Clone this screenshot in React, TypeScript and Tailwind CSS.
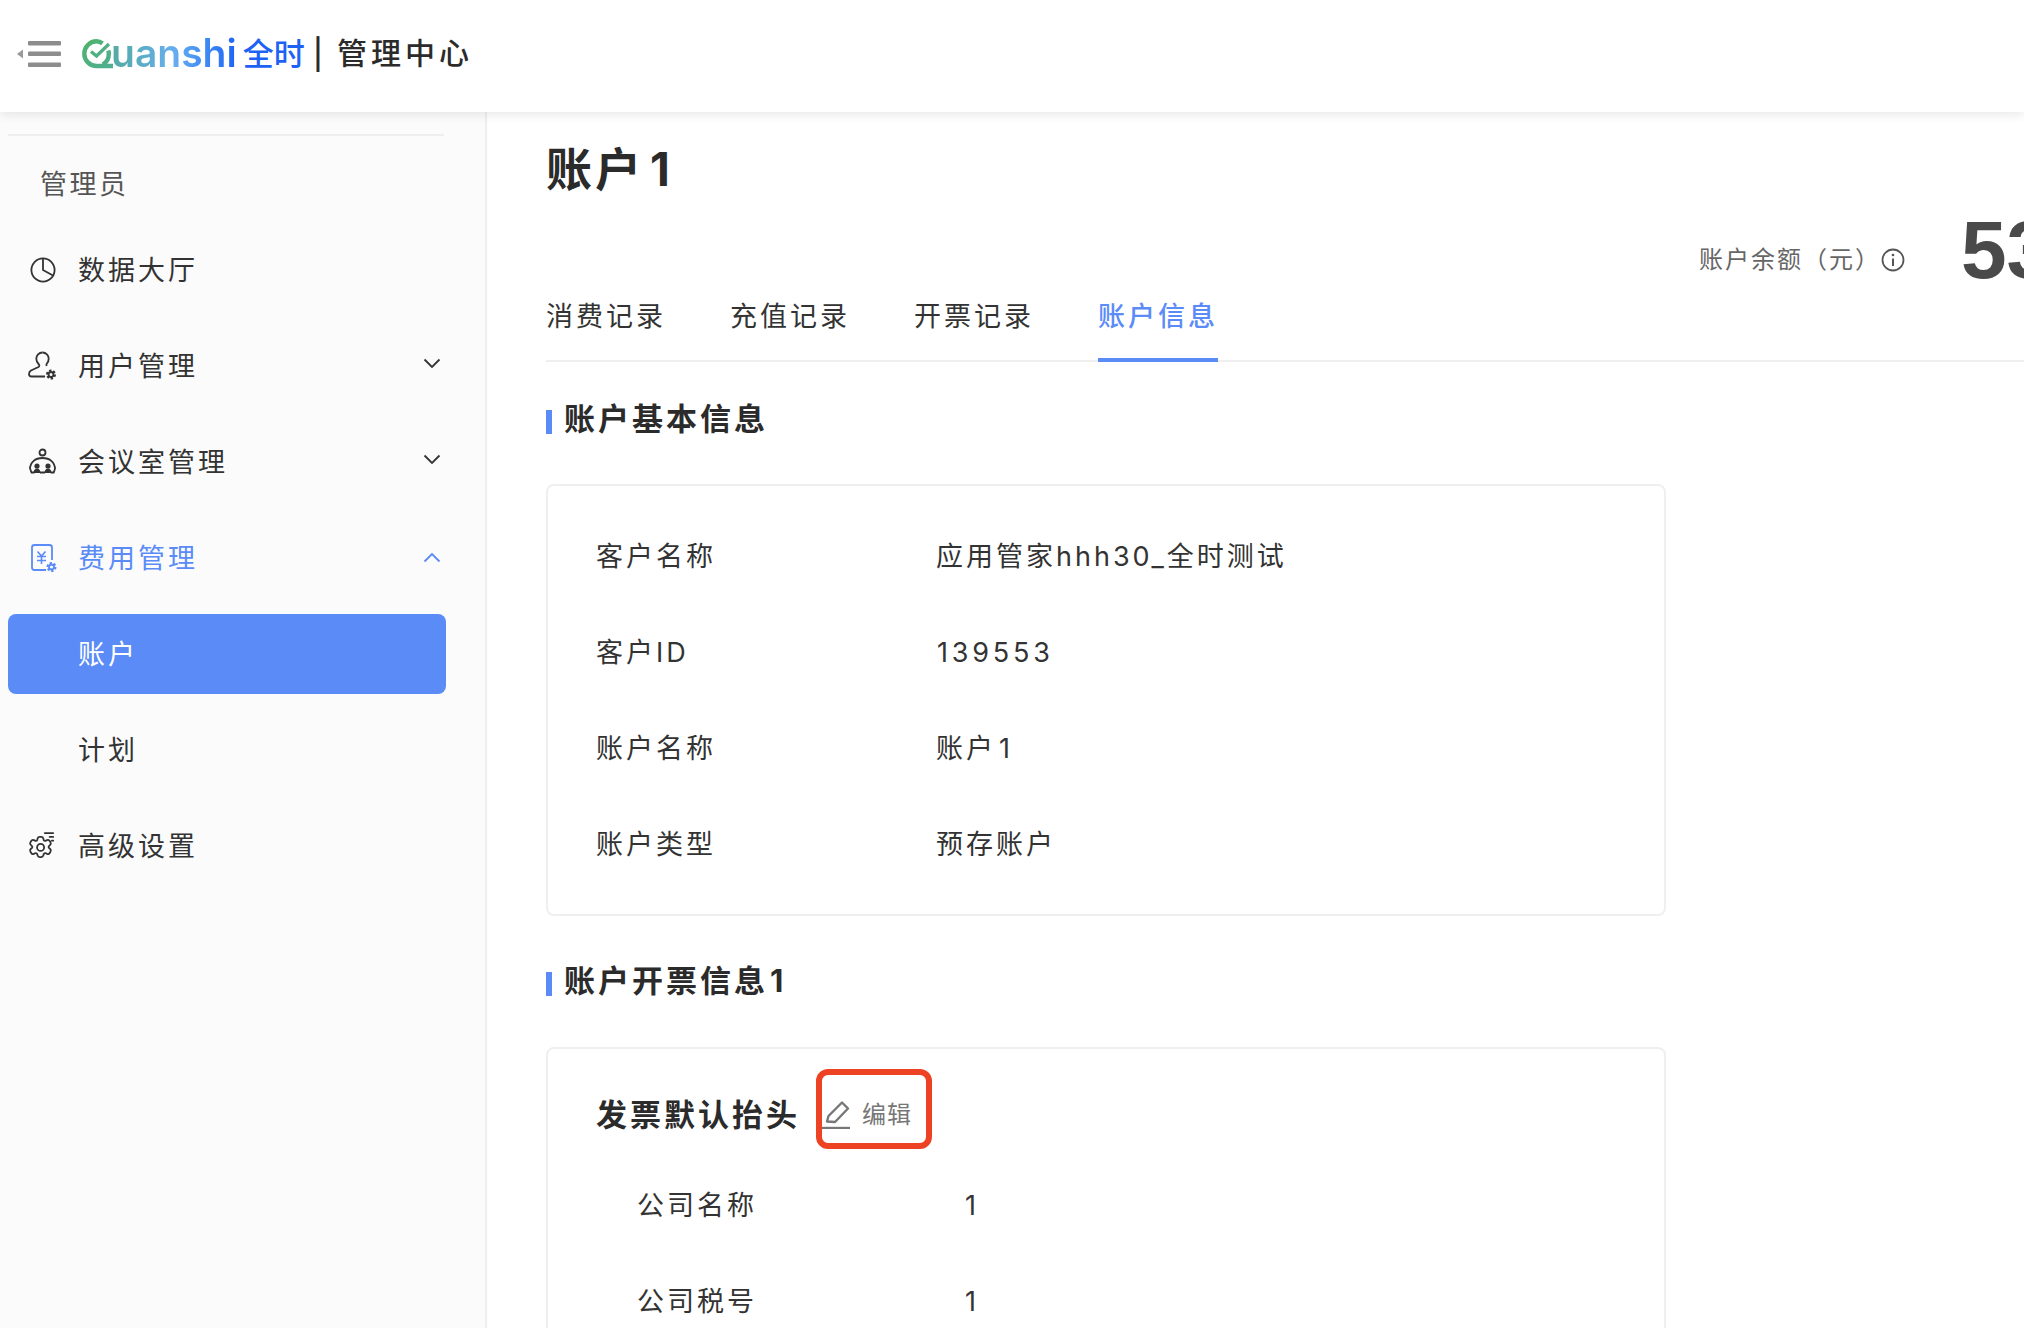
import React from "react";

const Gear = ({ cx, cy, c }: { cx: number; cy: number; c: string }) => (
  <g>
    <circle cx={cx} cy={cy} r={3.4} fill="none" stroke={c} strokeWidth={3.2} strokeDasharray="2 1.500" />
    <circle cx={cx} cy={cy} r={2.500} fill="none" stroke={c} strokeWidth={1.800} />
  </g>
);

const IconPie = () => (
  <svg width="28" height="28" viewBox="0 0 28 28" fill="none" stroke="#333" strokeWidth="1.800" className="ml-[29px] shrink-0">
    <circle cx="14" cy="14" r="11.600" />
    <path d="M14 2.400V14L24 19.500" />
  </svg>
);
const IconUser = () => (
  <svg width="30" height="30" viewBox="0 0 30 30" fill="none" stroke="#333" strokeWidth="1.800" className="ml-[28px] shrink-0">
    <path d="M14.500 1.500c-3.600 0-6.200 2.800-6.200 6.200 0 2.600 1.200 4.400 2.600 5.800.8.800.5 2-.4 2.500L3 19.500C1.500 20.400 1 21.600 1 23c0 1.600 1 2.500 2.500 2.500H17" />
    <path d="M14.500 1.500c3.600 0 6.200 2.800 6.200 6.200 0 2.200-.8 3.600-1.800 4.800-.6.700-.7 1.500-.3 2.500" />
    <Gear cx={23} cy={23.500} c="#333" />
  </svg>
);
const IconRoom = () => (
  <svg width="30" height="28" viewBox="0 0 30 28" fill="none" stroke="#333" strokeWidth="1.800" className="ml-[28px] shrink-0">
    <circle cx="14.500" cy="4.500" r="3" />
    <path d="M2 21c0-6.500 5-11 12.500-11S27 14.500 27 21" />
    <path d="M2.200 21l1.300 3.500h3M27 21l-1.300 3.500h-3M12 24.500h5" />
    <circle cx="9" cy="18" r="2.600" fill="#333" stroke="none" />
    <circle cx="20" cy="18" r="2.600" fill="#333" stroke="none" />
    <path d="M5.500 25c0-3 1.600-4.500 3.500-4.500s3.500 1.500 3.500 4.500M16.500 25c0-3 1.600-4.500 3.500-4.500s3.500 1.500 3.500 4.500" fill="#333" stroke="none" />
  </svg>
);
const IconFee = () => (
  <svg width="30" height="30" viewBox="0 0 30 30" fill="none" stroke="#5a8bf7" strokeWidth="1.800" className="ml-[30px] shrink-0">
    <path d="M16 27H4.500A2.500 2.500 0 0 1 2 24.500V4.500A2.500 2.500 0 0 1 4.500 2h15A2.500 2.500 0 0 1 22 4.500V17" />
    <path d="M7.500 8.500l4 4.500 4-4.500M7 13.500h9M7 17.500h9M11.500 13v8" strokeWidth="1.600" />
    <Gear cx={21.500} cy={24} c="#5a8bf7" />
  </svg>
);
const IconSettings = () => (
  <svg width="28" height="28" viewBox="3 1 20 20" fill="none" stroke="#333" strokeWidth="1.300" strokeLinecap="round" strokeLinejoin="round" className="ml-[28px] shrink-0">
    <path d="M12.500 4.500c.8 0 1.300.6 1.500 1.300l.2.800c.2.600 1 .9 1.600.6l.8-.4c.7-.3 1.500-.1 1.900.6l.6 1c.4.700.2 1.500-.4 2l-.6.500c-.5.400-.5 1.200 0 1.600l.6.500c.6.500.8 1.300.4 2l-.6 1c-.4.700-1.200.9-1.900.6l-.8-.4c-.6-.3-1.400 0-1.600.6l-.2.800c-.2.700-.7 1.300-1.500 1.300h-1.200c-.8 0-1.300-.6-1.500-1.300l-.2-.8c-.2-.6-1-.9-1.600-.6l-.8.4c-.7.300-1.500.1-1.900-.6l-.6-1c-.4-.7-.2-1.500.4-2l.6-.5c.5-.4.500-1.200 0-1.600l-.6-.5c-.6-.5-.8-1.300-.4-2l.6-1c.4-.7 1.200-.9 1.900-.6l.8.4c.6.300 1.400 0 1.600-.6l.2-.8c.2-.7.700-1.300 1.500-1.300z" />
    <circle cx="12" cy="12" r="2.500" />
    <path d="M15 1.800H21M18.500 4.500H21M20 7.200h1" />
  </svg>
);
const Chevron = ({ up, c }: { up?: boolean; c: string }) => (
  <svg width="18" height="11" viewBox="0 0 18 11" fill="none" stroke={c} strokeWidth="1.800" className={`ml-auto mr-[44px] shrink-0 ${up ? "mb-[2px]" : "mb-[6px]"}`}>
    <path d={up ? "M1.500 9.500L9 2l7.500 7.500" : "M1.500 1.500L9 9l7.500-7.500"} />
  </svg>
);

const MenuItem = ({ icon, label, chevron, up, active }: { icon: React.ReactNode; label: string; chevron?: boolean; up?: boolean; active?: boolean }) => {
  const c = active ? "#5a8bf7" : "#333";
  return (
    <div className={`flex items-center h-20 mb-4 ${active ? "text-[#5a8bf7]" : "text-[#333]"}`}>
      <div className="w-[78px] shrink-0 flex items-center">{icon}</div>
      <span className="text-[27px] tracking-[3px] whitespace-nowrap pt-[2px]">{label}</span>
      {chevron && <Chevron up={up} c={c} />}
    </div>
  );
};

const SectionTitle = ({ children, className }: { children: React.ReactNode; className: string }) => (
  <div className={`flex items-center h-10 ${className}`}>
    <div className="w-[6px] h-6 bg-[#5a8bf7] mt-[6px] shrink-0" />
    <h2 className="ml-[12px] text-[31px] leading-10 font-bold tracking-[3px] text-[#2b2b2b] whitespace-nowrap">{children}</h2>
  </div>
);

const InfoRow = ({ label, value, w, digits }: { label: string; value: React.ReactNode; w: string; digits?: boolean }) => (
  <div className="flex items-center h-24 pt-[2px] text-[27px] tracking-[3px] text-[#333]">
    <div className={`shrink-0 ${w}`}>{label}</div>
    <div className={digits ? "tracking-[3.800px] ml-[1px]" : ""}>{value}</div>
  </div>
);

export default function App() {
  return (
    <div className="w-[2024px] h-[1328px] overflow-hidden flex flex-col bg-white font-['Inter','Noto_Sans_CJK_SC',sans-serif]">
      <header className="h-[112px] shrink-0 bg-white flex items-center pb-[5px] relative z-10 shadow-[0_3px_10px_rgba(0,0,0,0.09)]">
        <svg width="44" height="26" viewBox="0 0 44 26" className="ml-[17px] shrink-0" fill="#8d8d8d">
          <path d="M0 13l6-4.500v9z" fill="#9a9a9a" />
          <rect x="11" y="0" width="33" height="4.500" rx="1" />
          <rect x="11" y="10.500" width="33" height="4.500" rx="1" />
          <rect x="11" y="21.500" width="33" height="4.500" rx="1" />
        </svg>
        <svg width="32" height="30" viewBox="0 0 32 30" fill="none" className="ml-[21px] shrink-0">
          <defs>
            <linearGradient id="qg" x1="0" y1="0" x2="1" y2="1">
              <stop offset="0" stopColor="#4fb26c" />
              <stop offset="1" stopColor="#4fae93" />
            </linearGradient>
          </defs>
          <path d="M20.500 4.500C18.700 3 16.500 2.300 14.500 2.300 7.800 2.300 2.300 8 2.300 14.700S7.800 27 14.500 27H31" stroke="url(#qg)" strokeWidth="4.400" />
          <path d="M26.300 11.500c.3 1 .5 2.100.5 3.200 0 4.600-2.300 8.800-6 10.800" stroke="url(#qg)" strokeWidth="4.400" />
          <path d="M9 12.500l5.500 4.500L27 5" stroke="url(#qg)" strokeWidth="3.200" />
        </svg>
        <span className="ml-[-3px] text-[39px] leading-none font-semibold bg-linear-to-r from-[#54aba0] via-[#66adf0] to-[#1e62f5] bg-clip-text text-transparent mb-[2px]">uanshi</span>
        <span className="ml-[6px] text-[31px] text-[#1e62f5] font-medium leading-none">全时</span>
        <span className="ml-[8px] text-[30px] text-[#2b2b2b] font-medium leading-none">|</span>
        <span className="ml-[14px] text-[30px] tracking-[4px] text-[#2b2b2b] font-medium leading-none mb-[2px]">管理中心</span>
      </header>

      <div className="flex flex-1 min-h-0">
        <aside className="w-[487px] shrink-0 bg-[#fbfbfb] border-r-2 border-[#eeeeee]">
          <div className="mt-[22px] ml-2 w-[436px] h-[2px] bg-[#eeeeee]" />
          <div className="h-[94px] flex items-center pl-[40px] pt-[5px] text-[27px] tracking-[2.500px] text-[#555]">管理员</div>
          <MenuItem icon={<IconPie />} label="数据大厅" />
          <MenuItem icon={<IconUser />} label="用户管理" chevron />
          <MenuItem icon={<IconRoom />} label="会议室管理" chevron />
          <MenuItem icon={<IconFee />} label="费用管理" chevron up active />
          <div className="ml-2 w-[438px] h-20 mb-4 rounded-lg bg-[#5a8bf7] flex items-center pl-[70px] pt-[2px] text-[27px] tracking-[3px] text-white">账户</div>
          <div className="h-20 mb-4 flex items-center pl-[78px] pt-[2px] text-[27px] tracking-[3px] text-[#333]">计划</div>
          <MenuItem icon={<IconSettings />} label="高级设置" />
        </aside>

        <main className="flex-1 min-w-0 overflow-hidden pl-[59px]">
          <div className="h-[112px] flex items-center pt-[2px]">
            <h1 className="text-[46px] font-bold tracking-[3px] text-[#2b2b2b] leading-none">账户<span className="ml-[6px]">1</span></h1>
          </div>
          <div className="h-[72px] flex items-center ml-[1153px] w-[400px] whitespace-nowrap">
            <span className="text-[24px] tracking-[2px] text-[#666]">账户余额（元）</span>
            <svg width="24" height="24" viewBox="0 0 24 24" fill="none" stroke="#555" strokeWidth="1.800" className="shrink-0">
              <circle cx="12" cy="12" r="10.500" />
              <path d="M12 10.500V18" strokeWidth="2" />
              <circle cx="12" cy="7" r="1.300" fill="#555" stroke="none" />
            </svg>
            <span className="ml-[56px] mb-[20px] text-[82px] leading-none font-bold text-[#4a4a4a] font-['Liberation_Sans',sans-serif]">53</span>
          </div>
          <nav className="flex gap-16 h-[66px] border-b-2 border-[#efefef]">
            <div className="h-[42px] leading-[42px] text-[27px] tracking-[3px] text-[#333]">消费记录</div>
            <div className="h-[42px] leading-[42px] text-[27px] tracking-[3px] text-[#333]">充值记录</div>
            <div className="h-[42px] leading-[42px] text-[27px] tracking-[3px] text-[#333]">开票记录</div>
            <div className="h-[66px] leading-[42px] text-[27px] tracking-[3px] text-[#5a8bf7] font-medium border-b-4 border-[#5a8bf7]">账户信息</div>
          </nav>

          <SectionTitle className="mt-[37px] mb-[45px]">账户基本信息</SectionTitle>
          <section className="w-[1120px] border-2 border-[#efefef] rounded-lg py-[22px] pl-[48px]">
            <InfoRow label="客户名称" value="应用管家hhh30_全时测试" w="w-[340px]" />
            <InfoRow label="客户ID" value="139553" w="w-[340px]" digits />
            <InfoRow label="账户名称" value={<>账户<span className="ml-[3px]">1</span></>} w="w-[340px]" />
            <InfoRow label="账户类型" value="预存账户" w="w-[340px]" />
          </section>

          <SectionTitle className="mt-[45px] mb-[46px]">账户开票信息<span className="ml-[2px]">1</span></SectionTitle>
          <section className="w-[1120px] border-2 border-[#efefef] rounded-lg pt-[26px] pb-[100px] pl-[48px]">
            <div className="flex items-center h-20 mb-[2px]">
              <h3 className="text-[31px] font-bold tracking-[3px] text-[#2b2b2b] whitespace-nowrap">发票默认抬头</h3>
              <div className="relative ml-[22px] flex items-center">
                <svg width="28" height="28" viewBox="0 0 28 28" fill="none" stroke="#777" strokeWidth="2.400" className="shrink-0">
                  <path d="M5 20.500l1.500-5.500L20 1.500l6 6L13 21z" strokeLinejoin="round" />
                  <path d="M0 27h28" />
                </svg>
                <span className="ml-3 text-[24px] tracking-[1px] text-[#777]">编辑</span>
                <div className="absolute left-[-6px] top-[-28px] w-[116px] h-20 border-[6px] border-[#ee4225] rounded-[12px]" />
              </div>
            </div>
            <div className="pl-[41px]">
              <InfoRow label="公司名称" value="1" w="w-[328px]" />
              <InfoRow label="公司税号" value="1" w="w-[328px]" />
            </div>
          </section>
        </main>
      </div>
    </div>
  );
}
